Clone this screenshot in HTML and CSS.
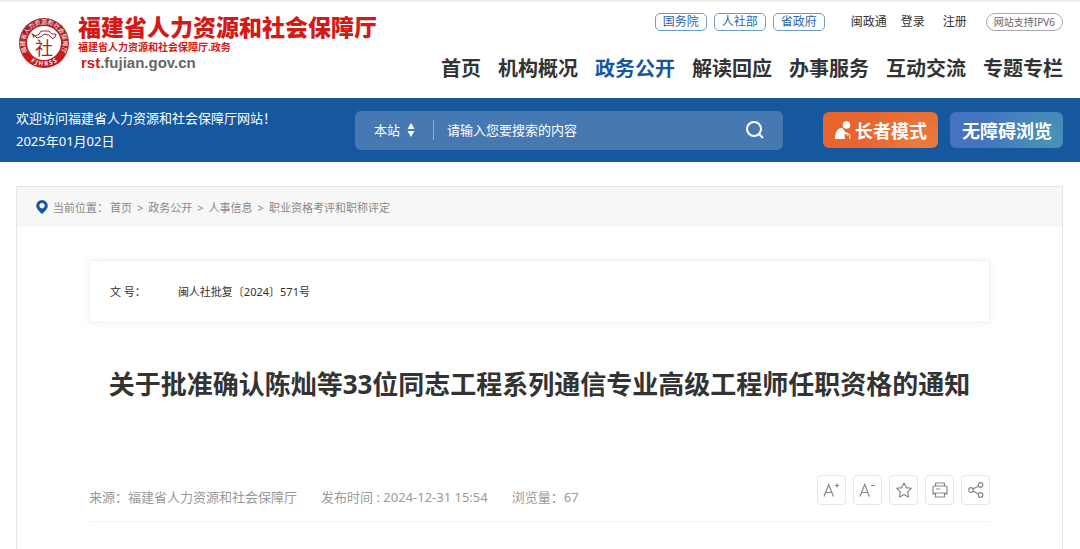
FILE: index.html
```html
<!DOCTYPE html>
<html lang="zh-CN">
<head>
    <meta charset="UTF-8">
    <meta name="viewport" content="width=device-width, initial-scale=1.0">
    <title>福建省人力资源和社会保障厅</title>
    <link rel="stylesheet" href="styles.css">
</head>
<body>
    <header class="header">
        <a class="logo" href="#">
            <svg class="seal" viewBox="0 0 52 52" aria-hidden="true">
                <defs>
                    <linearGradient id="ring" x1="0" y1="0" x2="0" y2="1">
                        <stop offset="0" stop-color="#a3262a"/>
                        <stop offset="1" stop-color="#d01a1c"/>
                    </linearGradient>
                    <path id="arc-top" d="M11 37.700 A19 19 0 1 1 41 37.700"/>
                    <path id="arc-bottom" d="M4.500 33.500 A22.800 22.800 0 0 0 47.500 33.500"/>
                </defs>
                <circle cx="26" cy="26" r="25" fill="url(#ring)"/>
                <circle cx="26" cy="26" r="17" fill="#fff"/>
                <text class="seal-top"><textPath href="#arc-top" startOffset="50%" text-anchor="middle">福建省人力资源和社会保障厅</textPath></text>
                <text class="seal-bottom"><textPath href="#arc-bottom" startOffset="50%" text-anchor="middle">F J H R S S</textPath></text>
                <path d="M14 17 L17 19 Q22 18 23 14 H31 Q33 18 38 17 Q38 21 34 22 M17 19 L19 21 Q24 20 26 17 Q31 17 34 21" fill="none" stroke="#a3262a"/>
                <path d="M13 16 l4 2 l-1 3z" fill="#a3262a"/>
                <text class="seal-main" x="26" y="38" text-anchor="middle">社</text>
            </svg>
            <span class="logo-text">
                <span class="logo-name">福建省人力资源和社会保障厅</span>
                <span class="logo-sub">福建省人力资源和社会保障厅.政务</span>
                <span class="logo-url"><em>rst</em>.fujian.gov.cn</span>
            </span>
        </a>
        <div class="header-right">
            <div class="top-links">
                <a class="pill" href="#">国务院</a>
                <a class="pill" href="#">人社部</a>
                <a class="pill" href="#">省政府</a>
                <a class="link link-first" href="#">闽政通</a>
                <a class="link" href="#">登录</a>
                <a class="link link-reg" href="#">注册</a>
                <a class="ipv6" href="#">网站支持IPV6</a>
            </div>
            <nav class="nav">
                <a href="#">首页</a>
                <a href="#">机构概况</a>
                <a class="active" href="#">政务公开</a>
                <a href="#">解读回应</a>
                <a href="#">办事服务</a>
                <a href="#">互动交流</a>
                <a href="#">专题专栏</a>
            </nav>
        </div>
    </header>

    <section class="banner">
        <div class="welcome">
            <p>欢迎访问福建省人力资源和社会保障厅网站！</p>
            <p>2025年01月02日</p>
        </div>
        <form class="search">
            <span class="scope">
                <select aria-label="搜索范围">
                    <option>本站</option>
                </select>
                <svg viewBox="0 0 8 14" aria-hidden="true"><path d="M4 0 L7.500 6 H0.500z M4 14 L0.500 8 H7.500z" fill="#fff"/></svg>
            </span>
            <input type="text" placeholder="请输入您要搜索的内容" aria-label="搜索内容">
            <button type="button" aria-label="搜索">
                <svg viewBox="0 0 18 18" fill="none" stroke="#fff" stroke-width="2"><circle cx="8" cy="8" r="7"/><path d="M13 13 L17 17"/></svg>
            </button>
        </form>
        <div class="modes">
            <button type="button" class="mode elder">
                <svg viewBox="0 0 16 18" aria-hidden="true"><circle cx="11.500" cy="4" r="3.800" fill="#fff"/><path d="M0 18 Q0 11 3 8.500 Q6 5.500 8 7.500 L10 11 L13.500 12 L13 13.500 L9.500 13 L10 18z" fill="#fff"/><path d="M11.500 14.500 Q14.500 12 14.800 15 V18" fill="none" stroke="#fff"/></svg>
                长者模式
            </button>
            <button type="button" class="mode access">无障碍浏览</button>
        </div>
    </section>

    <main class="content">
        <div class="crumbs">
            <svg viewBox="0 0 12 14" aria-hidden="true"><path fill-rule="evenodd" d="M6 0 A5.800 5.800 0 0 1 11.800 5.800 Q11.800 9 6 14 Q0.200 9 0.200 5.800 A5.800 5.800 0 0 1 6 0z M6 3 a2.700 2.700 0 1 0 0.010 0z" fill="#15589f"/></svg>
            <span>当前位置：</span>
            <a href="#">首页</a>
            <i>&gt;</i>
            <a href="#">政务公开</a>
            <i>&gt;</i>
            <a href="#">人事信息</a>
            <i>&gt;</i>
            <a href="#">职业资格考评和职称评定</a>
        </div>
        <article class="article">
            <div class="doc-card">
                <span>文 号：</span>
                <span>闽人社批复〔2024〕571号</span>
            </div>
            <h1>关于批准确认陈灿等33位同志工程系列通信专业高级工程师任职资格的通知</h1>
            <div class="meta">
                <span>来源：福建省人力资源和社会保障厅</span>
                <span>发布时间 : 2024-12-31 15:54</span>
                <span>浏览量：67</span>
                <div class="tools">
                    <button type="button" aria-label="放大字体">
                        <svg viewBox="0 0 18 18"><path d="M1 15.500 L5.700 3.500 L10.400 15.500 M2.600 11.500 H8.800 M12 4.500 H16 M14 2.500 V6.500"/></svg>
                    </button>
                    <button type="button" aria-label="缩小字体">
                        <svg viewBox="0 0 18 18"><path d="M1 15.500 L5.700 3.500 L10.400 15.500 M2.600 11.500 H8.800 M12 4.500 H16"/></svg>
                    </button>
                    <button type="button" aria-label="收藏">
                        <svg viewBox="0 0 18 18"><path stroke-linejoin="round" d="M9 2 L11.300 6.600 L16.300 7.300 L12.700 10.900 L13.500 16 L9 13.700 L4.500 16 L5.300 10.900 L1.700 7.300 L6.700 6.600z"/></svg>
                    </button>
                    <button type="button" aria-label="打印">
                        <svg viewBox="0 0 18 18"><path d="M4.500 5 V2 H13.500 V5 M4.500 13 H2 V6 Q2 5 3 5 H15 Q16 5 16 6 V13 H13.500 M3 12 H15 M4.500 12 V16 H13.500 V12 M5 8 H9"/></svg>
                    </button>
                    <button type="button" aria-label="分享">
                        <svg viewBox="0 0 18 18"><circle cx="4" cy="9" r="2.300"/><circle cx="13.500" cy="4" r="2.300"/><circle cx="13.500" cy="14" r="2.300"/><path d="M6 8 L11.500 5 M6 10 L11.500 13"/></svg>
                    </button>
                </div>
            </div>
        </article>
    </main>
</body>
</html>
```
FILE: styles.css
```css
* {
    box-sizing: border-box;
}

body {
    margin: 0;
    min-height: 100vh;
    display: flex;
    flex-direction: column;
    font-family: "Noto Sans", "Noto Sans CJK SC", sans-serif;
    color: #333;
    background: #fff;
    border-top: 2px solid #eee;
}

a {
    color: inherit;
    text-decoration: none;
}

p, h1 {
    margin: 0;
}

button, input, select {
    font-family: inherit;
    border: none;
    padding: 0;
    background: none;
}

button {
    cursor: pointer;
}

.header {
    display: flex;
    justify-content: space-between;
    height: 96px;
    padding: 11px 17px 0 18px;
}

.logo {
    display: flex;
    gap: 8px;
}

.seal {
    width: 52px;
    height: 52px;
    margin-top: 4px;
    overflow: visible;
}

.seal-top,
.seal-bottom {
    font-size: 6px;
    fill: #fff;
}

.seal-bottom {
    font-weight: bold;
}

.seal-main {
    font-size: 18px;
    fill: #a3262a;
}

.logo-text {
    display: flex;
    flex-direction: column;
}

.logo-name {
    font-family: "Noto Sans CJK SC", sans-serif;
    font-size: 23px;
    font-weight: 900;
    line-height: 27px;
    color: #d31a17;
}

.logo-sub {
    font-size: 10px;
    font-weight: bold;
    line-height: 15px;
    color: #d31a17;
}

.logo-url {
    padding-left: 3px;
    font-family: "Liberation Sans", sans-serif;
    font-size: 15px;
    font-weight: bold;
    line-height: 15px;
    color: #666;
}

.logo-url em {
    font-style: normal;
    color: #d31a17;
}

.header-right {
    display: flex;
    flex-direction: column;
    align-items: flex-end;
    gap: 24px;
}

.top-links {
    display: flex;
    align-items: center;
    font-size: 12px;
    line-height: 16px;
}

.pill {
    margin-right: 7px;
    padding: 0 7px;
    border: 1px solid #6f9bcb;
    border-radius: 5px;
    color: #2c67a8;
}

.link {
    margin-right: 15px;
}

.link-first {
    margin-left: 19px;
    margin-right: 14px;
}

.link-reg {
    margin-left: 3px;
    margin-right: 19px;
}

.ipv6 {
    padding: 0 7px;
    border: 1px solid #aaa;
    border-radius: 9px;
    font-size: 10px;
    color: #666;
}

.nav {
    display: flex;
    gap: 17px;
    font-size: 20px;
    font-weight: bold;
    line-height: 28px;
}

.nav .active {
    color: #15589f;
}

.banner {
    display: flex;
    align-items: center;
    height: 64px;
    padding: 0 17px 0 16px;
    background: #15589f;
    color: #fff;
}

.welcome {
    width: 339px;
    font-size: 13px;
    line-height: 23px;
}

.search {
    flex: 1;
    display: flex;
    align-items: center;
    height: 39px;
    margin-right: 40px;
    padding: 0 19px;
    border-radius: 6px;
    background: #4679b2;
}

.scope {
    display: flex;
    align-items: center;
    gap: 6px;
    height: 20px;
    padding-right: 18px;
    border-right: 1px solid #8fb0d3;
}

.scope select {
    appearance: none;
    font-size: 13px;
    color: #fff;
}

.scope svg {
    width: 8px;
    height: 14px;
}

.search input {
    flex: 1;
    min-width: 0;
    padding-left: 13px;
    font-size: 13px;
    color: #fff;
    outline: none;
}

.search input::placeholder {
    color: #fff;
}

.search svg {
    display: block;
}

.search button svg {
    width: 18px;
    height: 18px;
}

.modes {
    display: flex;
    gap: 12px;
}

.mode {
    display: flex;
    align-items: center;
    gap: 4px;
    height: 36px;
    padding: 0 11px 0 12px;
    border-radius: 6px;
    font-size: 18px;
    font-weight: bold;
    color: #fff;
}

.mode svg {
    width: 16px;
    height: 18px;
}

.elder {
    background: radial-gradient(circle at 85% 100%, #ec7d3c, #e8652f 55%);
}

.access {
    background: radial-gradient(circle at 88% 75%, #4795b5, #4573c0 65%);
}

.content {
    flex: 1;
    margin: 24px 17px 0 16px;
    border: 1px solid #e6e6e6;
    border-bottom: none;
}

.crumbs {
    display: flex;
    align-items: center;
    gap: 5px;
    height: 40px;
    padding-left: 19px;
    background: #f7f7f7;
    font-size: 11px;
    color: #888;
}

.crumbs svg {
    width: 12px;
    height: 14px;
}

.crumbs span {
    margin-right: -3px;
}

.crumbs i {
    font-style: normal;
}

.article {
    padding: 33px 72px 0;
}

.doc-card {
    display: flex;
    gap: 32px;
    padding: 20px;
    border: 1px solid #f0f0f0;
    box-shadow: 0 0 10px rgba(0, 0, 0, 0.05);
    font-size: 11px;
    line-height: 21px;
}

.article h1 {
    margin: 41px 0 69px;
    font-size: 26px;
    line-height: 40px;
    text-align: center;
    white-space: nowrap;
}

.meta {
    display: flex;
    align-items: center;
    gap: 24px;
    padding-bottom: 15px;
    border-bottom: 1px solid #f0f0f0;
    font-size: 13px;
    color: #999;
}

.meta span {
    padding-top: 14px;
}

.tools {
    display: flex;
    gap: 7px;
    margin-left: auto;
}

.tools button {
    display: flex;
    align-items: center;
    justify-content: center;
    width: 29px;
    height: 30px;
    border: 1px solid #e6e6e6;
    border-radius: 4px;
}

.tools svg {
    width: 18px;
    height: 18px;
    fill: none;
    stroke: #888;
    stroke-width: 1.2;
}
```
